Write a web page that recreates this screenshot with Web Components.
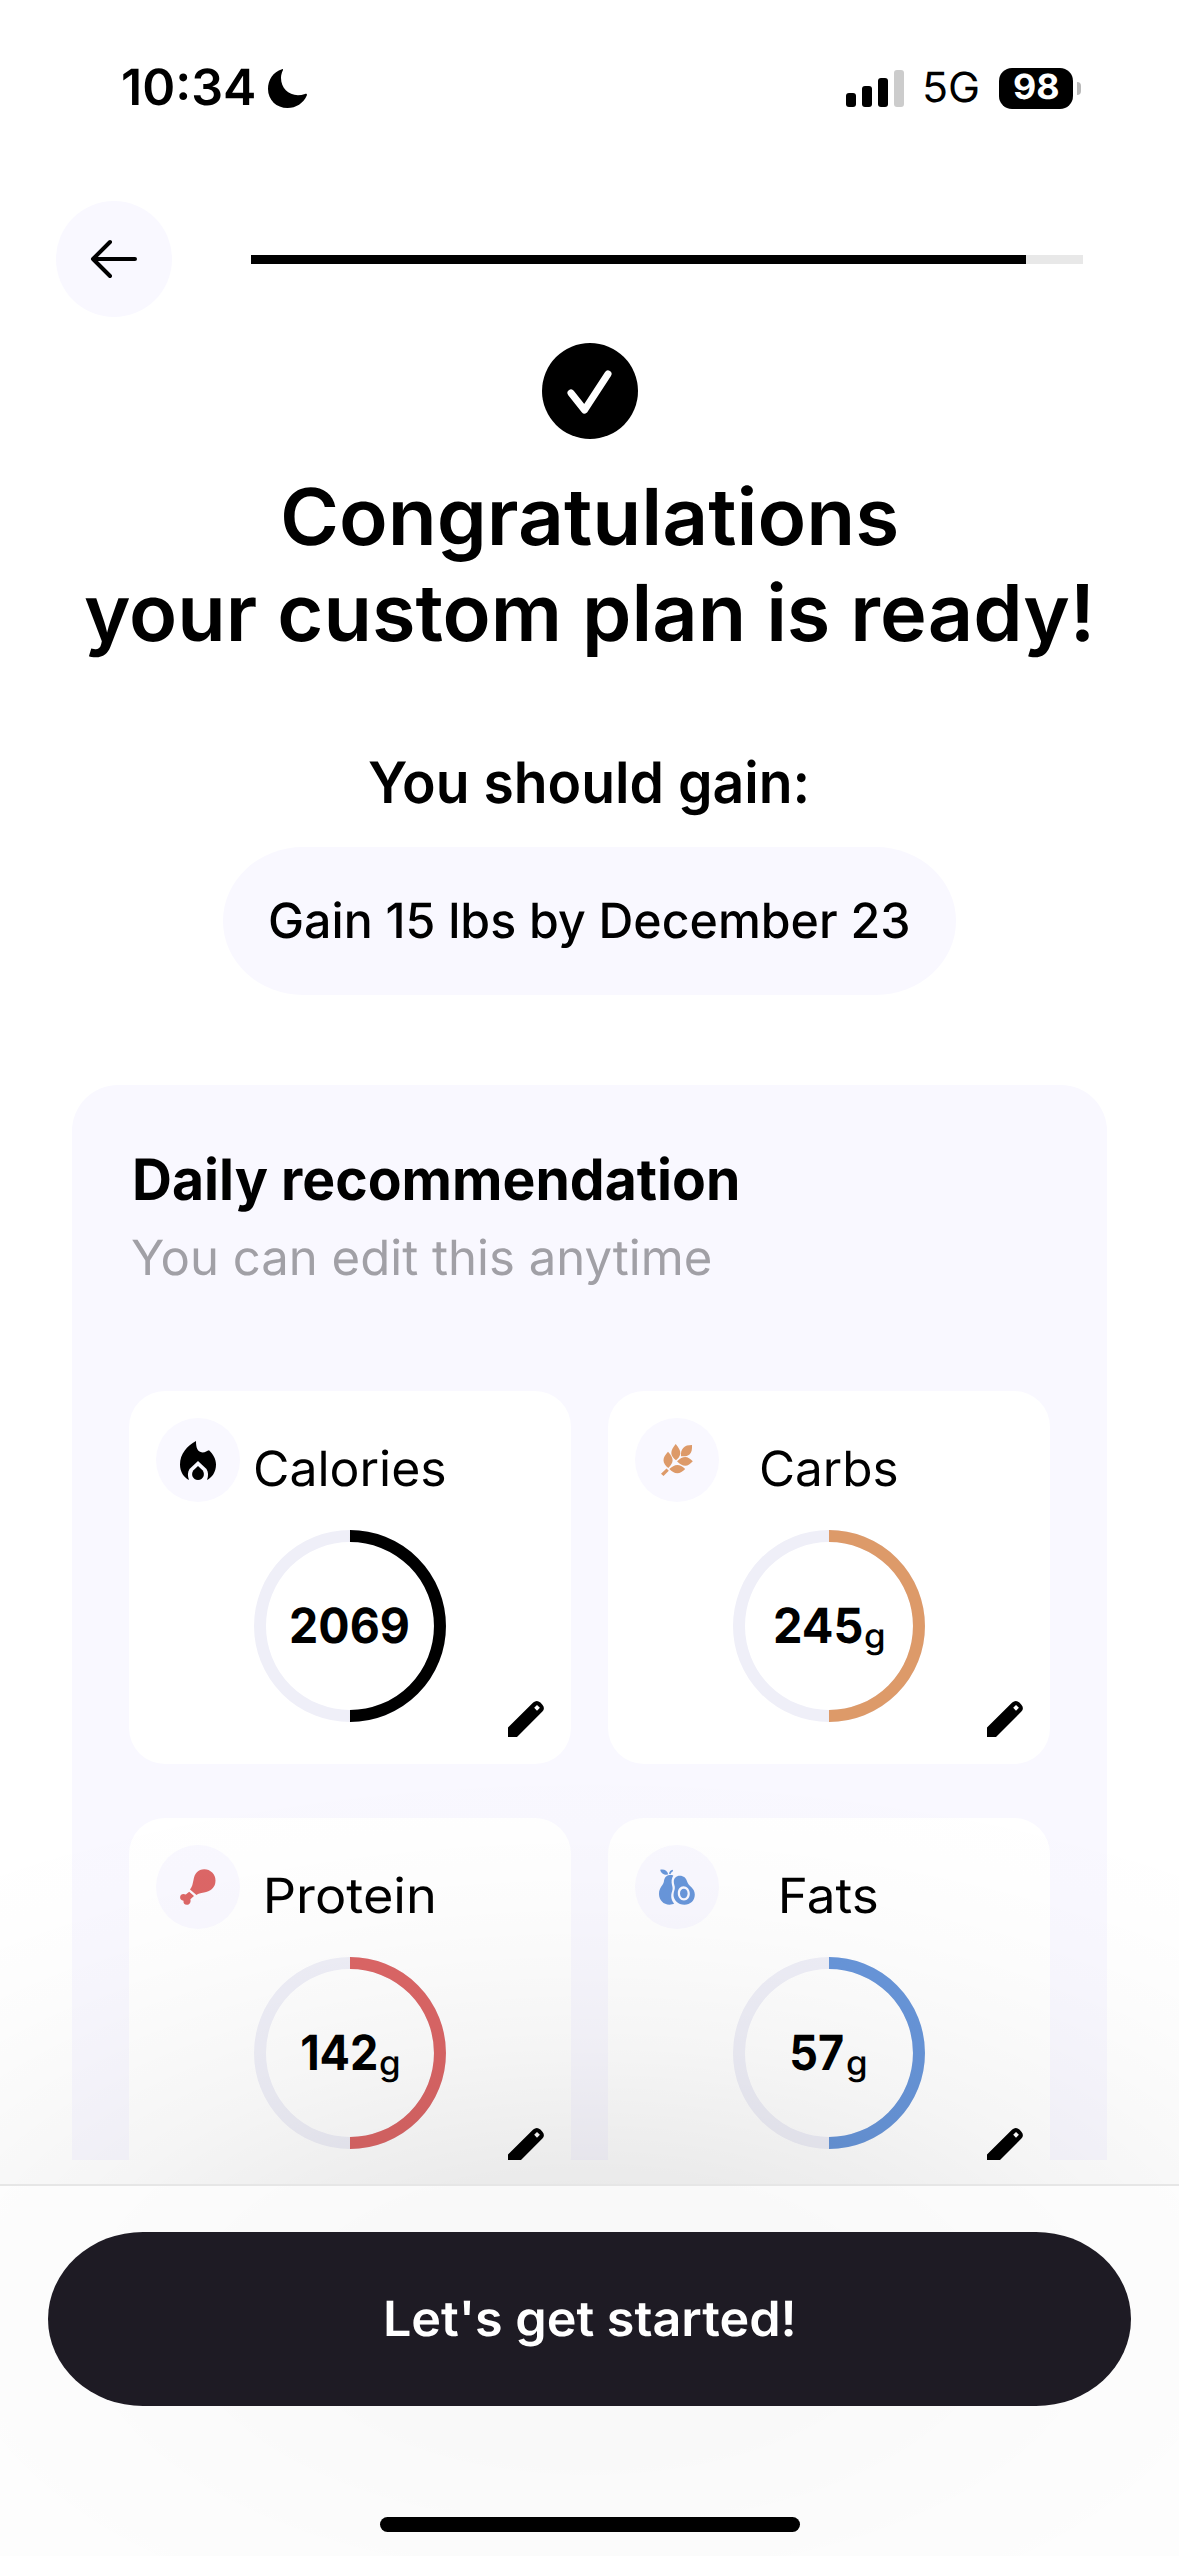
<!DOCTYPE html>
<html lang="en">
<head>
<meta charset="utf-8">
<title>Your custom plan</title>
<style>
  html, body { margin: 0; padding: 0; background: #fff; }
  body { width: 1179px; height: 2556px; overflow: hidden; font-family: Inter, "Liberation Sans", sans-serif; color: #000; }
</style>
</head>
<body>
<plan-screen></plan-screen>

<script>
const define = (name, html, setup) => {
  const template = document.createElement('template');
  template.innerHTML = html;
  customElements.define(name, class extends HTMLElement {
    connectedCallback() {
      if (this.shadowRoot) return;
      const root = this.attachShadow({ mode: 'open' });
      root.append(document.importNode(template.content, true));
      if (setup) setup(this, root);
    }
  });
};

/* One line of text whose visible width is stretched to the given number of pixels. */
const pen = document.createElement('canvas').getContext('2d');
define('fit-text', `
  <style>
    :host { display: block; flex: none; white-space: nowrap; text-rendering: geometricPrecision; }
    span { display: block; width: max-content; transform-origin: 0 50%; }
  </style>
  <span><slot></slot></span>`, (host, root) => {
  const size = +host.getAttribute('size');
  const weight = host.getAttribute('weight') || 400;
  const width = +host.getAttribute('width');
  const text = host.textContent;
  const span = root.querySelector('span');
  pen.font = `${weight} ${size}px Inter, "Liberation Sans", sans-serif`;
  pen.textRendering = 'geometricPrecision';
  const m = pen.measureText(text);
  const ink = m.actualBoundingBoxLeft + m.actualBoundingBoxRight;
  const scale = width / ink;
  span.style.font = `${weight} ${size}px/${host.getAttribute('line') || 60}px Inter, "Liberation Sans", sans-serif`;
  host.style.width = width + 'px';
  span.style.transform = `translateX(${(m.actualBoundingBoxLeft * scale).toFixed(2)}px) scaleX(${scale.toFixed(4)})`;
});

define('status-bar', `
  <style>
    :host { display: flex; align-items: center; box-sizing: border-box; height: 176px; padding: 0 98px 0 123px; }
    svg { display: block; flex: none; }
    .moon { margin-left: 14px; }
    .signal { margin-left: auto; margin-right: 21px; }
    .battery { display: flex; align-items: center; justify-content: center; width: 74px; height: 41px; border-radius: 13px; background: #000; color: #fff; margin-left: 21px; }
    .nub { width: 4px; height: 13px; margin-left: 4px; border-radius: 0 4px 4px 0; background: #b9b9b9; }
  </style>
  <fit-text size="50" weight="600" width="131" line="62">10:34</fit-text>
  <svg class="moon" width="39" height="39" viewBox="0 0 39 39"><path d="M14 .2C5 3 0 11 0 20c0 11 8.500 19 19.500 19 8.500 0 16-5 19.300-12.600.5-1.400-.4-2-1.800-1.500C24 29.500 13 21 13 9c0-3 .8-5.500 1.800-7.500.5-1 .2-1.600-.8-1.300z"/></svg>
  <svg class="signal" width="58" height="37" viewBox="0 0 58 37"><rect y="23" width="10" height="14" rx="3"/><rect x="16" y="16" width="10" height="21" rx="3"/><rect x="32" y="8" width="10" height="29" rx="3"/><rect x="48" width="10" height="37" rx="3" fill="#ccc"/></svg>
  <fit-text size="41.500" weight="400" width="53" line="64">5G</fit-text>
  <div class="battery"><fit-text size="34.500" weight="700" width="44">98</fit-text></div>
  <div class="nub"></div>`);

define('step-header', `
  <style>
    :host { display: flex; align-items: center; gap: 79px; padding: 25px 96px 0 56px; }
    .back { display: flex; align-items: center; justify-content: center; width: 116px; height: 116px; border-radius: 50%; background: #f9f8ff; flex: none; }
    .track { flex: 1; height: 9px; background: #e8e8e8; }
    .done { width: 775px; height: 9px; background: #000; }
  </style>
  <div class="back"><svg width="50" height="42" viewBox="1 0 50 42" fill="none" stroke="#000" stroke-width="4" stroke-linecap="round" stroke-linejoin="round"><path d="M47 21H5M22 4L5 21l17 17"/></svg></div>
  <div class="track"><div class="done"></div></div>`);

define('plan-heading', `
  <style>
    :host { display: flex; flex-direction: column; align-items: center; padding-top: 26px; }
    .check { display: block; margin-bottom: 30px; }
    .second { margin-right: 5px; }
    .lead { margin: 93px 5px 34px 0; }
    .goal { margin-right: 2px; }
    .pill { display: flex; align-items: center; justify-content: center; width: 733px; height: 148px; background: #f9f8ff; border-radius: 80px / 74px; }
  </style>
  <svg class="check" width="96" height="96" viewBox="0 0 96 96"><circle cx="48" cy="48" r="48"/><path d="M29 50L42.500 67L66 31" fill="none" stroke="#fff" stroke-width="7" stroke-linecap="round" stroke-linejoin="round"/></svg>
  <fit-text size="78.500" weight="640" width="613" line="95.5">Congratulations</fit-text>
  <fit-text class="second" size="78.500" weight="640" width="1004" line="95.5">your custom plan is ready!</fit-text>
  <fit-text class="lead" size="57" weight="620" width="437">You should gain:</fit-text>
  <div class="pill"><fit-text class="goal" size="48.500" weight="500" width="638">Gain 15 lbs by December 23</fit-text></div>`);

const icons = {
  flame: '<svg width="36" height="39" viewBox="0 0 36 39"><path d="M16 0c0 6 1 11 6.500 11.500 3 0 4.500-2 6.500-2.200 4 3.700 7 8.700 7 14.200 0 7.500-4 13-9 15.500 1.500-4 1.500-8-.5-11L18 20l-8.500 8c-2 3-2 7-.5 11-5-2.500-9-8-9-15.500C0 13 7 5 16 0z"/><path d="M18 25l-4.500 4.300C10.500 33 12.500 39 18 39s7.500-6 4.500-9.700z"/></svg>',
  wheat: '<svg width="32" height="33" viewBox="0 0 32 33" fill="#dd9a69"><path d="M14.700 0C18 4 19.500 6.500 19.300 9.500c-.2 2.500-2 5-4.300 6.700-2.500-2-4.600-4.200-4.700-7C10.200 6 12 3.500 14.700 0zM31 1c.2 4.500-.3 7.500-2.500 9.500-2 1.800-5 2-8.500 1.700-.2-3.500.2-6.200 2.200-8.200C24.500 1.600 27 1 31 1zM16 17.300c3-2.800 5.500-4.300 8.300-4.300 2.700 0 4.900 1.700 7.500 4.300-2.500 2.700-4.800 4.500-7.500 4.500-3 0-5.500-1.700-8.300-4.500zM7 7.700c3 3.300 4.600 5.600 4.600 8.600 0 2.700-1.600 5-4.300 7.700-3-2.500-4.800-5-4.800-7.800 0-3 1.800-5.300 4.500-8.500zM8.300 25c2.600-2.200 5.200-4 8-4 2.700 0 5.200 1.500 7.900 4-2.700 2.600-4.900 4.200-7.900 4.200s-5.400-1.700-8-4.200zM0 29.700L5.500 24.500 7.800 26.800 2.500 32z"/></svg>',
  drumstick: '<svg width="36" height="36" viewBox="0 0 36 36" fill="#dc6666"><path d="M24.300.2A11.300 11.300 0 0 1 35.500 11.500c0 7.500-5.500 11-11.500 12-4 .5-5.500 1-7.500 2.500L10 20.500c2.500-3 2.500-5.500 3.500-9.500C14.500 4.500 18 .2 24.300.2zM9.200 22.700l4.800 4.200-3.600 3.300c.8 3.200-1 5.600-3.600 5.600-2.300 0-3.600-1.600-3.300-4C1.200 31.500 0 30 .1 28c.2-2.700 3-3.900 5.700-2.500z"/></svg>',
  avocado: '<svg width="37" height="37" viewBox="0 0 37 37" fill="#6896da"><path d="M1.200.8C5 0 8.500 1.500 9.200 5.600 5.500 6.200 2 5 1.200.8zM11.600 5.200L10 4.700C10.400 2.500 11.500 1.200 13.800.7L14 2.200c-1.300.5-2.200 1.500-2.400 3zM14.300 6.400C10 5 5.500 6.800 5 12 4.500 16.500 0 18 0 25c0 6 4.500 10.700 10.500 10.700 2 0 3.500-.5 4.700-1.200C12 31 11.500 26.500 13.200 22c.7-2 .5-3.500-.2-6-.8-3.500-.5-6.600 1.300-9.600z"/><path fill-rule="evenodd" d="M20.700 6.700c4 0 6.500 2.300 7.500 6 1.200 4.300 7.600 6.300 7.600 12.700 0 6-4.500 10.300-10.300 10.300C19 35.700 14.500 31 14.500 26c0-3.500 1.600-5 1.300-8-.2-2-1-3-1-5.300 0-3.500 2.500-6 5.900-6zM24.500 17.300c-3.500 0-5.700 3-5.700 7s2.700 7.200 6.200 7.200 5.800-3 5.800-7-2.800-7.200-6.300-7.200z"/><ellipse cx="24.800" cy="24.500" rx="3.800" ry="4.800"/></svg>'
};

define('macro-card', `
  <style>
    :host { display: grid; box-sizing: border-box; height: 373px; padding: 27px; border-radius: 36px; background: #fff; }
    :host > * { grid-area: 1 / 1; }
    .badge { display: flex; align-items: center; justify-content: center; width: 84px; height: 84px; border-radius: 50%; background: #f9f8ff; }
    .body { display: flex; flex-direction: column; align-items: center; gap: 31px; padding-top: 21px; }
    .ring { display: grid; width: 192px; height: 192px; }
    .ring > * { grid-area: 1 / 1; }
    .value { display: flex; align-items: center; justify-content: center; gap: 4px; }
    .unit { margin-top: 22px; }
    .edit { display: block; place-self: end; }
  </style>
  <div class="badge"></div>
  <div class="body">
    <div class="label"></div>
    <div class="ring">
      <svg width="192" height="192" viewBox="0 0 192 192" fill="none" stroke-width="12"><circle cx="96" cy="96" r="90" stroke="#efeff8"/><path class="arc" d="M96 6a90 90 0 0 1 0 180"/></svg>
      <div class="value"></div>
    </div>
  </div>
  <svg class="edit" width="36" height="36" viewBox="0 0 36 36"><path fill-rule="evenodd" d="M0 36v-9.400L25.200 1.600Q28.800-1.500 32.400 1.600l2 2.200q3 3.400 0 6.800L9 36zM29 3.900l-2.800 2.800 2.800 3 2.900-3z"/></svg>`, (host, root) => {
  const at = n => host.getAttribute(n);
  root.querySelector('.badge').innerHTML = icons[at('icon')];
  root.querySelector('.arc').setAttribute('stroke', at('color'));
  root.querySelector('.label').innerHTML = `<fit-text size="48.500" weight="400" width="${at('label-width')}">${at('label')}</fit-text>`;
  root.querySelector('.value').innerHTML =
    `<fit-text size="48.5" weight="650" width="${at('value-width')}">${at('value')}</fit-text>` +
    (at('unit') ? `<fit-text class="unit" size="34" weight="500" width="18.5">${at('unit')}</fit-text>` : '');
});

define('daily-panel', `
  <style>
    :host { display: block; box-sizing: border-box; height: 1075px; margin: 90px 72px 0; padding: 65px 57px 0; overflow: hidden; background: #f9f8ff; border-radius: 46px 46px 0 0; }
    .title { margin-left: 6px; }
    .note { margin: 18px 0 103px 3px; color: #a1a0a6; }
    .grid { display: grid; grid-template-columns: 442px 442px; column-gap: 37px; row-gap: 54px; }
  </style>
  <fit-text class="title" size="57" weight="650" width="602">Daily recommendation</fit-text>
  <fit-text class="note" size="48.500" weight="400" width="578">You can edit this anytime</fit-text>
  <div class="grid"><slot></slot></div>`);

define('action-footer', `
  <style>
    :host { display: block; position: relative; height: 372px; margin-top: 24px; }
    /* Ambient shadow cast by the button; it also falls over the panel above. */
    .shade { position: absolute; left: 0; right: 0; top: -440px; bottom: 0; pointer-events: none;
      background: radial-gradient(1130px 575px at 50% 575px,
        rgba(0,0,0,.105) 0%, rgba(0,0,0,.079) 26%, rgba(0,0,0,.058) 37%, rgba(0,0,0,.039) 48%,
        rgba(0,0,0,.023) 61%, rgba(0,0,0,.012) 73%, rgba(0,0,0,.005) 86%, rgba(0,0,0,0) 100%); }
    .sheet { position: relative; display: flex; flex-direction: column; align-items: center; justify-content: space-between; box-sizing: border-box; height: 372px; padding: 46px 48px 24px; border-top: 2px solid #e6e6e6; background: rgba(254,254,254,.76); }
    .button { display: flex; align-items: center; justify-content: center; width: 1083px; height: 174px; border-radius: 95px / 87px; background: #1e1b24; color: #fff; }
    .label { margin-right: 1px; }
    .home { width: 420px; height: 15px; border-radius: 8px; background: #000; }
  </style>
  <div class="shade"></div>
  <div class="sheet">
    <div class="button"><fit-text class="label" size="48.500" weight="600" width="407">Let's get started!</fit-text></div>
    <div class="home"></div>
  </div>`);

define('plan-screen', `
  <style>
    :host { display: flex; flex-direction: column; width: 1179px; height: 2556px; overflow: hidden; background: #fff; }
    :host > * { flex: none; }
  </style>
  <status-bar></status-bar>
  <step-header></step-header>
  <plan-heading></plan-heading>
  <daily-panel>
    <macro-card icon="flame" label="Calories" label-width="190" value="2069" value-width="117.500" color="#000"></macro-card>
    <macro-card icon="wheat" label="Carbs" label-width="136" value="245" value-width="86.500" unit="g" color="#dd9a69"></macro-card>
    <macro-card icon="drumstick" label="Protein" label-width="166" value="142" value-width="74" unit="g" color="#dc6666"></macro-card>
    <macro-card icon="avocado" label="Fats" label-width="95" value="57" value-width="51" unit="g" color="#6896da"></macro-card>
  </daily-panel>
  <action-footer></action-footer>`);
</script>
</body>
</html>
